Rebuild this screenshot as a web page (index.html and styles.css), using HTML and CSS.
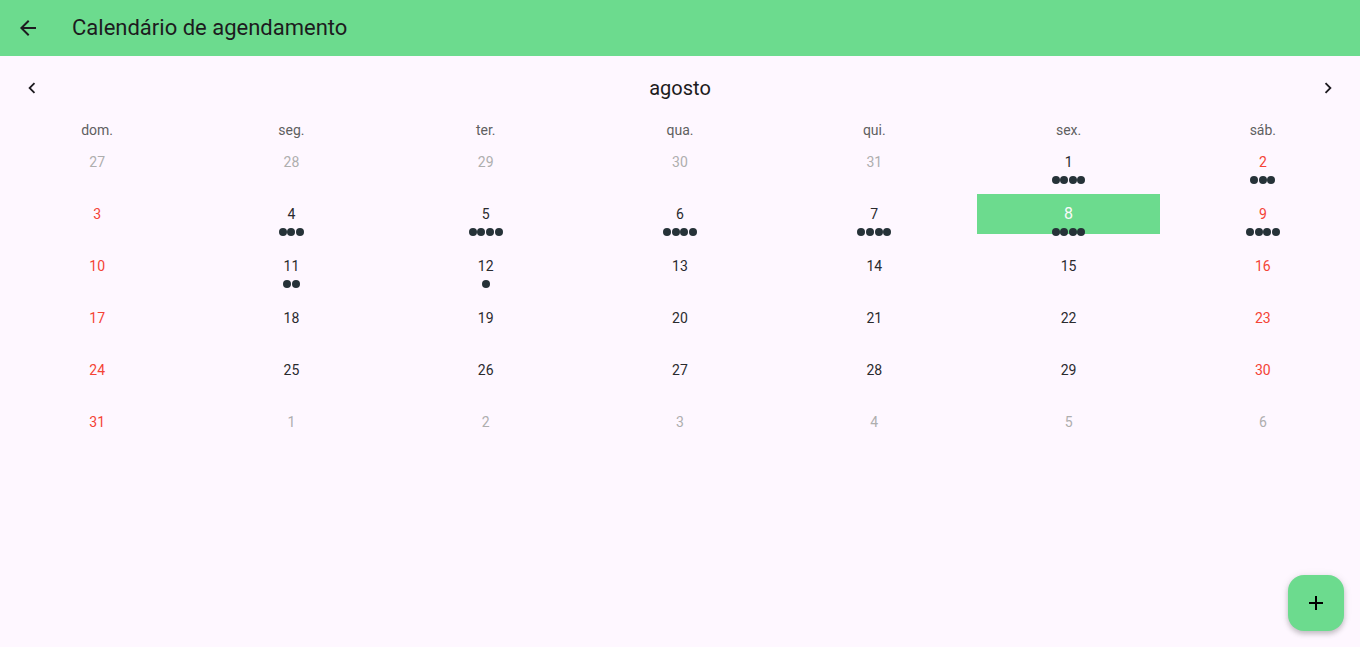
FILE: index.html
```html
<!DOCTYPE html>
<html lang="pt">
<head>
<meta charset="utf-8">
<title>Calendário de agendamento</title>
<link rel="stylesheet" href="styles.css">
</head>
<body>
<header class="appbar">
  <button class="icon-btn back" aria-label="Voltar">
    <svg viewBox="0 0 24 24" width="24" height="24"><path d="M20 11H7.83l5.59-5.59L12 4l-8 8 8 8 1.41-1.41L7.83 13H20v-2z" fill="#1d1b20"/></svg>
  </button>
  <h1 class="title">Calendário de agendamento</h1>
</header>
<main class="calendar">
  <div class="cal-header">
    <button class="chev" aria-label="Anterior">
      <svg viewBox="0 0 24 24" width="22" height="22"><path d="M15.41 7.41L14 6l-6 6 6 6 1.41-1.41L10.83 12z" fill="#1d1b20"/></svg>
    </button>
    <div class="month">agosto</div>
    <button class="chev" aria-label="Próximo">
      <svg viewBox="0 0 24 24" width="22" height="22"><path d="M10 6L8.59 7.41 13.17 12l-4.58 4.59L10 18l6-6z" fill="#1d1b20"/></svg>
    </button>
  </div>
  <div class="dow">
    <span>dom.</span><span>seg.</span><span>ter.</span><span>qua.</span><span>qui.</span><span>sex.</span><span>sáb.</span>
  </div>
  <div class="grid">
    <div class="cell outside"><span>27</span></div>
    <div class="cell outside"><span>28</span></div>
    <div class="cell outside"><span>29</span></div>
    <div class="cell outside"><span>30</span></div>
    <div class="cell outside"><span>31</span></div>
    <div class="cell"><span>1</span><div class="marks"><i></i><i></i><i></i><i></i></div></div>
    <div class="cell weekend"><span>2</span><div class="marks"><i></i><i></i><i></i></div></div>

    <div class="cell weekend"><span>3</span></div>
    <div class="cell"><span>4</span><div class="marks"><i></i><i></i><i></i></div></div>
    <div class="cell"><span>5</span><div class="marks"><i></i><i></i><i></i><i></i></div></div>
    <div class="cell"><span>6</span><div class="marks"><i></i><i></i><i></i><i></i></div></div>
    <div class="cell"><span>7</span><div class="marks"><i></i><i></i><i></i><i></i></div></div>
    <div class="cell selected"><span>8</span><div class="marks"><i></i><i></i><i></i><i></i></div></div>
    <div class="cell weekend"><span>9</span><div class="marks"><i></i><i></i><i></i><i></i></div></div>

    <div class="cell weekend"><span>10</span></div>
    <div class="cell"><span>11</span><div class="marks"><i></i><i></i></div></div>
    <div class="cell"><span>12</span><div class="marks"><i></i></div></div>
    <div class="cell"><span>13</span></div>
    <div class="cell"><span>14</span></div>
    <div class="cell"><span>15</span></div>
    <div class="cell weekend"><span>16</span></div>

    <div class="cell weekend"><span>17</span></div>
    <div class="cell"><span>18</span></div>
    <div class="cell"><span>19</span></div>
    <div class="cell"><span>20</span></div>
    <div class="cell"><span>21</span></div>
    <div class="cell"><span>22</span></div>
    <div class="cell weekend"><span>23</span></div>

    <div class="cell weekend"><span>24</span></div>
    <div class="cell"><span>25</span></div>
    <div class="cell"><span>26</span></div>
    <div class="cell"><span>27</span></div>
    <div class="cell"><span>28</span></div>
    <div class="cell"><span>29</span></div>
    <div class="cell weekend"><span>30</span></div>

    <div class="cell weekend"><span>31</span></div>
    <div class="cell outside"><span>1</span></div>
    <div class="cell outside"><span>2</span></div>
    <div class="cell outside"><span>3</span></div>
    <div class="cell outside"><span>4</span></div>
    <div class="cell outside"><span>5</span></div>
    <div class="cell outside"><span>6</span></div>
  </div>
</main>
<button class="fab" aria-label="Adicionar">
  <svg viewBox="0 0 24 24" width="24" height="24"><path d="M19 13h-6v6h-2v-6H5v-2h6V5h2v6h6v2z" fill="#000"/></svg>
</button>
</body>
</html>
```
FILE: styles.css
```css
* { box-sizing: border-box; }
html, body { margin: 0; padding: 0; }
body {
  width: 1360px;
  height: 647px;
  overflow: hidden;
  background: #fef7ff;
  font-family: Roboto, "Noto Sans", sans-serif;
  color: #1d1b20;
  position: relative;
}
button {
  border: 0;
  background: none;
  padding: 0;
  cursor: pointer;
  font: inherit;
}
.appbar {
  height: 56px;
  background: #6cdb8e;
  display: flex;
  align-items: center;
  padding-left: 4px;
}
.icon-btn {
  width: 48px;
  height: 48px;
  display: flex;
  align-items: center;
  justify-content: center;
}
.icon-btn svg { display: block; }
.title {
  margin: 0 0 0 20px;
  font-size: 22px;
  font-weight: 400;
  line-height: 28px;
  color: #1d1b20;
}
.cal-header {
  height: 64px;
  display: flex;
  align-items: center;
  justify-content: space-between;
  padding: 0 21px;
}
.chev {
  width: 22px;
  height: 22px;
  display: flex;
  align-items: center;
  justify-content: center;
}
.chev svg { display: block; }
.month {
  font-size: 20px;
  line-height: 24px;
  color: #1d1b20;
  flex: 1;
  text-align: center;
}
.dow {
  height: 16px;
  margin-top: 1px;
  margin-bottom: -1px;
  display: grid;
  grid-template-columns: repeat(7, 1fr);
  font-size: 14px;
  line-height: 18px;
  color: #5f5f5f;
  text-align: center;
}
.grid {
  display: grid;
  grid-template-columns: repeat(7, 1fr);
  grid-auto-rows: 52px;
}
.cell {
  margin: 6px;
  position: relative;
  display: flex;
  align-items: center;
  justify-content: center;
  font-size: 14px;
  color: #2a2a2e;
}
.cell span { line-height: 16px; }
.cell.weekend { color: #f44336; }
.cell.outside { color: #aeaeae; }
.cell.selected {
  background: #6cdb8e;
  color: #fafafa;
  font-size: 16px;
}
.marks {
  position: absolute;
  left: 0;
  right: 0;
  bottom: -2px;
  display: flex;
  justify-content: center;
}
.marks i {
  width: 8px;
  height: 8px;
  margin: 0 0.3px;
  border-radius: 50%;
  background: #263238;
}
.fab {
  position: absolute;
  right: 16px;
  bottom: 16px;
  width: 56px;
  height: 56px;
  border-radius: 16px;
  background: #6cdb8e;
  display: flex;
  align-items: center;
  justify-content: center;
  box-shadow: 0 3px 5px rgba(0,0,0,0.18), 0 1px 8px rgba(0,0,0,0.10);
}
.fab svg { display: block; }
```
